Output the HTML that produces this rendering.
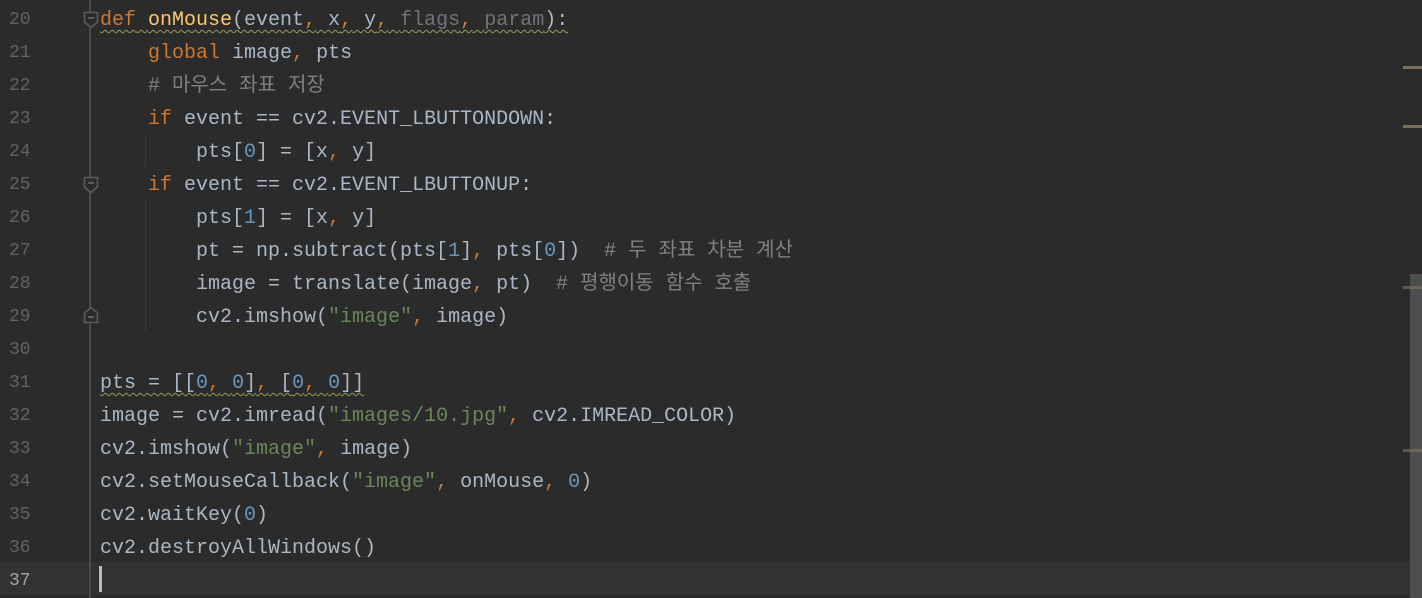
<!DOCTYPE html>
<html><head><meta charset="utf-8"><style>
body{margin:0;width:1422px;height:598px;background:#2b2b2b;overflow:hidden;position:relative;font-family:"Liberation Mono","Noto Sans CJK KR",monospace;font-size:20px;}
.row{position:absolute;left:0;width:1422px;height:33px;line-height:33px;white-space:pre;}
.ln{position:absolute;left:9px;top:3px;color:#606366;font-size:18px;}
.code{position:absolute;left:100px;top:3px;color:#a9b7c6;}
.k{color:#cc7832}.c{color:#808080}.n{color:#6897bb}.s{color:#6a8759}.f{color:#ffc66d}.g{color:#72737a}
.w{text-decoration:underline wavy #9e9a5a;text-decoration-thickness:1px;text-underline-offset:4px}
.gl{position:absolute;left:89px;top:0;width:2px;height:598px;background:#4a4a4a}
.ig{position:absolute;width:1px;background:#3b3b3b}
.fold{position:absolute;left:83px;width:16px;height:18px}
.mk{position:absolute;left:1403px;width:19px;height:3px;background:#7a6f58}
</style></head><body>
<div class="row" style="top:562px;background:#323232"></div>
<div class="gl"></div>
<div class="ig" style="left:145px;top:134px;height:33px"></div>
<div class="ig" style="left:145px;top:200px;height:132px"></div>
<svg class="fold" style="top:11px" viewBox="0 0 16 18"><path d="M1.5 1.5H14.5V11L8 16.5L1.5 11Z" fill="#2b2b2b" stroke="#5c5c5c" stroke-width="1.6"/><path d="M5 7H11" stroke="#6c6c6c" stroke-width="1.6"/></svg>
<svg class="fold" style="top:176px" viewBox="0 0 16 18"><path d="M1.5 1.5H14.5V11L8 16.5L1.5 11Z" fill="#2b2b2b" stroke="#5c5c5c" stroke-width="1.6"/><path d="M5 7H11" stroke="#6c6c6c" stroke-width="1.6"/></svg>
<svg class="fold" style="top:306px" viewBox="0 0 16 18"><path d="M1.5 16.5H14.5V7L8 1.5L1.5 7Z" fill="#2b2b2b" stroke="#5c5c5c" stroke-width="1.6"/><path d="M5 11H11" stroke="#6c6c6c" stroke-width="1.6"/></svg>
<div class="row" style="top:1px"><span class="ln">20</span><span class="code"><span class="w"><span class="k">def</span> <span class="f">onMouse</span>(event<span class="k">,</span> x<span class="k">,</span> y<span class="k">,</span> <span class="g">flags</span><span class="k">,</span> <span class="g">param</span>):</span></span></div>
<div class="row" style="top:34px"><span class="ln">21</span><span class="code">    <span class="k">global</span> image<span class="k">,</span> pts</span></div>
<div class="row" style="top:67px"><span class="ln">22</span><span class="code"><span class="c">    # 마우스 좌표 저장</span></span></div>
<div class="row" style="top:100px"><span class="ln">23</span><span class="code">    <span class="k">if</span> event == cv2.EVENT_LBUTTONDOWN:</span></div>
<div class="row" style="top:133px"><span class="ln">24</span><span class="code">        pts[<span class="n">0</span>] = [x<span class="k">,</span> y]</span></div>
<div class="row" style="top:166px"><span class="ln">25</span><span class="code">    <span class="k">if</span> event == cv2.EVENT_LBUTTONUP:</span></div>
<div class="row" style="top:199px"><span class="ln">26</span><span class="code">        pts[<span class="n">1</span>] = [x<span class="k">,</span> y]</span></div>
<div class="row" style="top:232px"><span class="ln">27</span><span class="code">        pt = np.subtract(pts[<span class="n">1</span>]<span class="k">,</span> pts[<span class="n">0</span>])  <span class="c"># 두 좌표 차분 계산</span></span></div>
<div class="row" style="top:265px"><span class="ln">28</span><span class="code">        image = translate(image<span class="k">,</span> pt)  <span class="c"># 평행이동 함수 호출</span></span></div>
<div class="row" style="top:298px"><span class="ln">29</span><span class="code">        cv2.imshow(<span class="s">"image"</span><span class="k">,</span> image)</span></div>
<div class="row" style="top:331px"><span class="ln">30</span></div>
<div class="row" style="top:364px"><span class="ln">31</span><span class="code"><span class="w">pts = [[<span class="n">0</span><span class="k">,</span> <span class="n">0</span>]<span class="k">,</span> [<span class="n">0</span><span class="k">,</span> <span class="n">0</span>]]</span></span></div>
<div class="row" style="top:397px"><span class="ln">32</span><span class="code">image = cv2.imread(<span class="s">"images/10.jpg"</span><span class="k">,</span> cv2.IMREAD_COLOR)</span></div>
<div class="row" style="top:430px"><span class="ln">33</span><span class="code">cv2.imshow(<span class="s">"image"</span><span class="k">,</span> image)</span></div>
<div class="row" style="top:463px"><span class="ln">34</span><span class="code">cv2.setMouseCallback(<span class="s">"image"</span><span class="k">,</span> onMouse<span class="k">,</span> <span class="n">0</span>)</span></div>
<div class="row" style="top:496px"><span class="ln">35</span><span class="code">cv2.waitKey(<span class="n">0</span>)</span></div>
<div class="row" style="top:529px"><span class="ln">36</span><span class="code">cv2.destroyAllWindows()</span></div>
<div class="row" style="top:562px"><span class="ln" style="color:#a4a3a3">37</span></div>
<div style="position:absolute;left:99px;top:566px;width:3px;height:26px;background:#bbbbbb"></div>
<div style="position:absolute;left:1410px;top:274px;width:12px;height:324px;background:#4e4e4e"></div>
<div class="mk" style="top:66px"></div>
<div class="mk" style="top:125px"></div>
<div class="mk" style="top:286px;opacity:.7"></div>
<div class="mk" style="top:449px;opacity:.7"></div>
</body></html>
